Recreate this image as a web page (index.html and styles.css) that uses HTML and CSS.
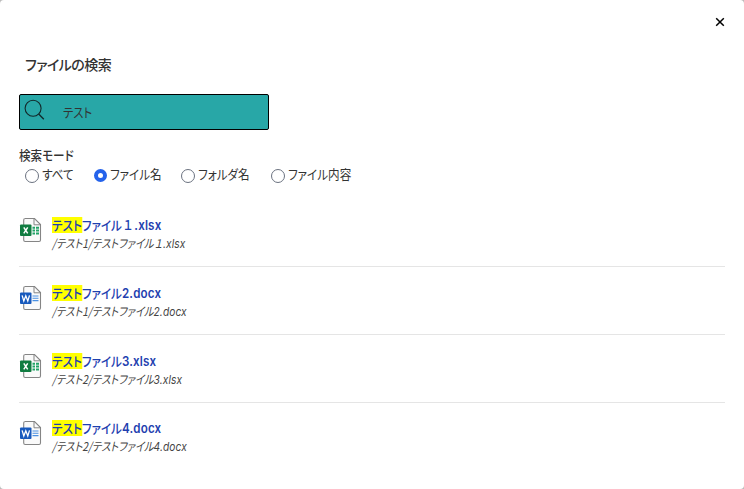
FILE: index.html
```
<!DOCTYPE html>
<html lang="ja">
<head>
    <meta charset="UTF-8">
    <meta name="viewport" content="width=device-width, initial-scale=1.0">
    <title>ファイルの検索</title>
    <link rel="stylesheet" href="styles.css">
</head>
<body>
    <!-- file type icons -->
    <svg class="defs" width="0" height="0">
        <symbol id="page" viewBox="0 0 24 26">
            <path d="M5.7 1.5H15.5L21.5 7.5V23Q21.5 24.5 20 24.5H6.2Q4.7 24.5 4.7 23V3Q4.7 1.5 6.2 1.5Z" fill="#fafafa" stroke="#858585" stroke-width="1.1"/>
            <path d="M15 1.8V7.8H21.3" fill="none" stroke="#858585" stroke-width="1"/>
        </symbol>
        <symbol id="xlsx" viewBox="0 0 24 26">
            <use href="#page"/>
            <path d="M13.5 9.7h2.5v2h-2.5zM17 9.7h3v2h-3zM13.5 12.6h2.5v2h-2.5zM17 12.6h3v2h-3zM13.5 15.5h2.5v2h-2.5zM17 15.5h3v2h-3z" fill="#21a366"/>
            <rect x="1" y="7.5" width="11.5" height="11.5" rx="1" fill="#107c41"/>
            <path d="M4.8 10.3L8.7 16.3M8.7 10.3L4.8 16.3" stroke="#fff" stroke-width="1.5"/>
        </symbol>
        <symbol id="docx" viewBox="0 0 24 26">
            <use href="#page"/>
            <path d="M13.5 11h6M13.5 13.3h6M13.5 15.6h6" stroke="#4a90e2" stroke-width="1.1"/>
            <rect x="1" y="7.5" width="11.5" height="11.5" rx="1" fill="#185abd"/>
            <path d="M3.1 10.4L4.8 16L6.8 10.8L8.8 16L10.5 10.4" fill="none" stroke="#fff" stroke-width="1.3"/>
        </symbol>
    </svg>

    <div class="modal">
        <button class="close" aria-label="閉じる">
            <svg width="10" height="10" viewBox="0 0 10 10"><path d="M1.2 1.2L8.8 8.8M8.8 1.2L1.2 8.8" stroke="#000" stroke-width="1.5"/></svg>
        </button>

        <h2 class="title">ファイルの検索</h2>

        <div class="search-box">
            <svg class="search-icon" width="22" height="22" viewBox="0 0 22 22"><circle cx="9.1" cy="9.3" r="8" fill="none" stroke="#12282a" stroke-width="1.1"/><path d="M14.7 15L19.8 20.3" stroke="#12282a" stroke-width="1.3"/></svg>
            <span class="keyword">テスト</span>
        </div>

        <div class="mode-title">検索モード</div>
        <div class="modes">
            <label class="mode"><span class="radio"></span><span class="mode-text">すべて</span></label>
            <label class="mode"><span class="radio checked"></span><span class="mode-text">ファイル名</span></label>
            <label class="mode"><span class="radio"></span><span class="mode-text">フォルダ名</span></label>
            <label class="mode"><span class="radio"></span><span class="mode-text">ファイル内容</span></label>
        </div>

        <ul class="results">
            <li class="result">
                <svg class="file-icon"><use href="#xlsx"/></svg>
                <div>
                    <div class="file-name"><mark>テスト</mark>ファイル<span class="wide">１</span><span class="ext">.xlsx</span></div>
                    <div class="file-path">/テスト1/テストファイル<span class="wide">１</span><span class="ext">.xlsx</span></div>
                </div>
            </li>
            <li class="result">
                <svg class="file-icon"><use href="#docx"/></svg>
                <div>
                    <div class="file-name"><mark>テスト</mark>ファイル<span class="ext">2.docx</span></div>
                    <div class="file-path">/テスト1/テストファイル<span class="ext">2.docx</span></div>
                </div>
            </li>
            <li class="result">
                <svg class="file-icon"><use href="#xlsx"/></svg>
                <div>
                    <div class="file-name"><mark>テスト</mark>ファイル<span class="ext">3.xlsx</span></div>
                    <div class="file-path">/テスト2/テストファイル<span class="ext">3.xlsx</span></div>
                </div>
            </li>
            <li class="result">
                <svg class="file-icon"><use href="#docx"/></svg>
                <div>
                    <div class="file-name"><mark>テスト</mark>ファイル<span class="ext">4.docx</span></div>
                    <div class="file-path">/テスト2/テストファイル<span class="ext">4.docx</span></div>
                </div>
            </li>
        </ul>
    </div>
</body>
</html>
```
FILE: styles.css
```
* {
    box-sizing: border-box;
}

body {
    margin: 0;
    background-color: #bbb;
    color: #333;
    font-family: "Noto Sans CJK JP", sans-serif;
    font-size: 13px;
    font-feature-settings: "palt";
}

.defs {
    display: block;
}

.modal {
    height: 489px;
    padding: 17px 19px 0;
    background-color: #fff;
    border-radius: 4px;
    overflow: hidden;
}

.close {
    display: block;
    width: 10px;
    height: 10px;
    margin: 0 0 0 auto;
    padding: 0;
    border: none;
    background: none;
    cursor: pointer;
}

.close svg {
    display: block;
}

.title {
    margin: 27px 0 0 6px;
    font-size: 14px;
    line-height: 20px;
    font-weight: 500;
    letter-spacing: -0.55px;
}

.search-box {
    display: flex;
    align-items: center;
    width: 250px;
    height: 36px;
    margin-top: 20px;
    padding: 0 4px;
    background-color: #28a7a7;
    border: 1px solid #000;
    border-radius: 2px;
}

.search-icon {
    margin-bottom: 4px;
}

.keyword {
    margin: 0 0 2px 17px;
    transform: scaleX(0.87);
    transform-origin: left;
}

.mode-title {
    width: 80px;
    margin-top: 15px;
    line-height: 20px;
    font-weight: 500;
    transform: scaleX(0.89);
    transform-origin: left;
}

.modes {
    display: grid;
    grid-template-columns: 69px 87px 90px 100px;
    height: 20px;
    padding-left: 6px;
}

.mode {
    display: flex;
    align-items: center;
    gap: 3px;
    height: 20px;
    line-height: 20px;
    white-space: nowrap;
}

.mode-text {
    margin-bottom: 3px;
    transform: scaleX(0.89);
    transform-origin: left;
}

.radio {
    width: 14px;
    height: 14px;
    margin-top: 1px;
    border: 1px solid #6b7280;
    border-radius: 50%;
    background-color: #fff;
}

.radio.checked {
    width: 13px;
    height: 13px;
    border: 4px solid #2563eb;
}

.results {
    margin: 14px 0 0;
    padding: 0;
    list-style: none;
}

.result {
    display: flex;
    gap: 9px;
    height: 68px;
    padding-top: 17px;
    border-bottom: 1px solid #e5e5e5;
}

.result:last-child {
    border-bottom: none;
    padding-top: 16px;
}

.file-icon {
    width: 24px;
    height: 26px;
    margin-top: 1px;
}

.file-name {
    display: flex;
    align-items: baseline;
    height: 18px;
    color: #1e40af;
    line-height: 18px;
    font-weight: 500;
    transform: scaleX(0.89);
    transform-origin: left;
}

mark {
    height: 16px;
    background-color: #ff0;
    color: inherit;
    line-height: 16px;
}

.file-path {
    display: flex;
    align-items: baseline;
    height: 20px;
    color: #444;
    font-size: 12px;
    line-height: 18px;
    font-style: italic;
    transform: scaleX(0.85);
    transform-origin: left;
}

.wide {
    padding: 0 2px;
}

.file-path .wide {
    padding: 0 1px;
}

.ext {
    font-family: Inter, sans-serif;
    font-weight: 600;
    letter-spacing: 0.2px;
}

.file-path .ext {
    font-weight: 400;
    letter-spacing: 0.1px;
}
```
